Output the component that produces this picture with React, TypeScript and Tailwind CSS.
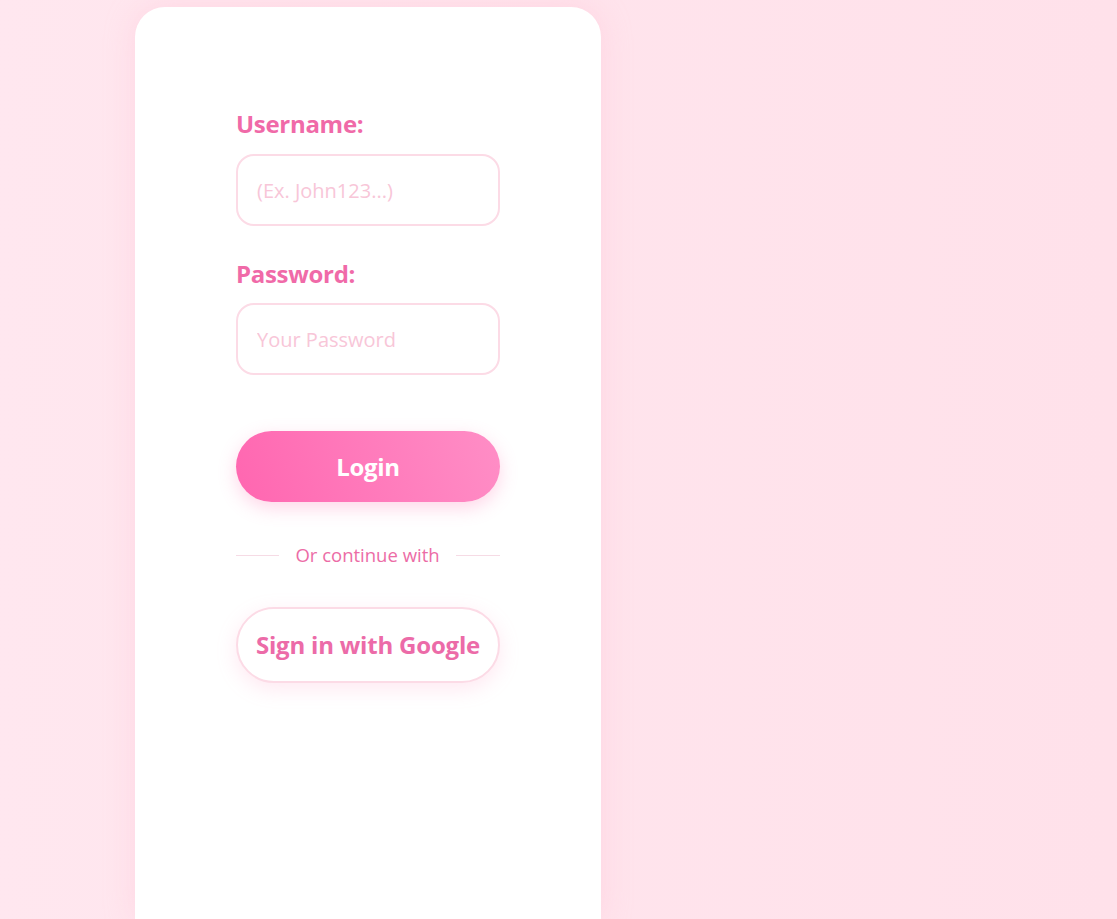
import React from "react";

export default function App() {
  return (
    <div
      className="h-[919px] w-full bg-gradient-to-r from-[#ffe7ef] to-[#ffe1ea] overflow-hidden"
      style={{ fontFamily: '"Open Sans", "Noto Sans", sans-serif' }}
    >
      <div className="ml-[135px] mt-[7px] w-[466px] h-[912px] bg-white rounded-t-[30px] shadow-[0_0_30px_rgba(255,182,206,0.35)] pl-[101px] pt-[99px]">
        <div className="w-[264px] flex flex-col">
          <label className="text-[24px] font-bold text-[#f06aa8] leading-[36px] tracking-[-0.3px]">Username:</label>
          <input
            className="mt-[12px] h-[72px] w-full rounded-[18px] border-2 border-[#fcdbe6] px-[19px] text-[20px] text-[#e0559a] placeholder:text-[#f8c6d8] outline-none"
            placeholder="(Ex. John123...)"
          />
          <label className="mt-[30px] text-[24px] font-bold text-[#f06aa8] leading-[36px] tracking-[-0.3px]">Password:</label>
          <input
            type="password"
            className="mt-[11px] h-[72px] w-full rounded-[18px] border-2 border-[#fcdbe6] px-[19px] text-[20px] text-[#e0559a] placeholder:text-[#f8c6d8] outline-none"
            placeholder="Your Password"
          />
          <button className="mt-[56px] h-[71px] w-full rounded-full bg-[linear-gradient(70deg,#ff66b0,#ff8ec6)] text-white text-[24px] font-bold shadow-[0_6px_18px_rgba(255,120,180,0.3)] tracking-[-0.3px]">
            Login
          </button>
          <div className="mt-[40px] flex items-center">
            <div className="w-[43px] h-px bg-[#f6dbe5]" />
            <span className="flex-1 text-center text-[18.5px] text-[#ec6ca6] leading-[26px]">Or continue with</span>
            <div className="w-[44px] h-px bg-[#f6dbe5]" />
          </div>
          <button className="mt-[39px] h-[76px] w-full rounded-full bg-white border-2 border-[#fcdbe6] text-[#ec6ba8] text-[24px] font-bold shadow-[0_6px_20px_rgba(255,150,190,0.22)] tracking-[-0.2px]">
            Sign in with Google
          </button>
        </div>
      </div>
    </div>
  );
}
